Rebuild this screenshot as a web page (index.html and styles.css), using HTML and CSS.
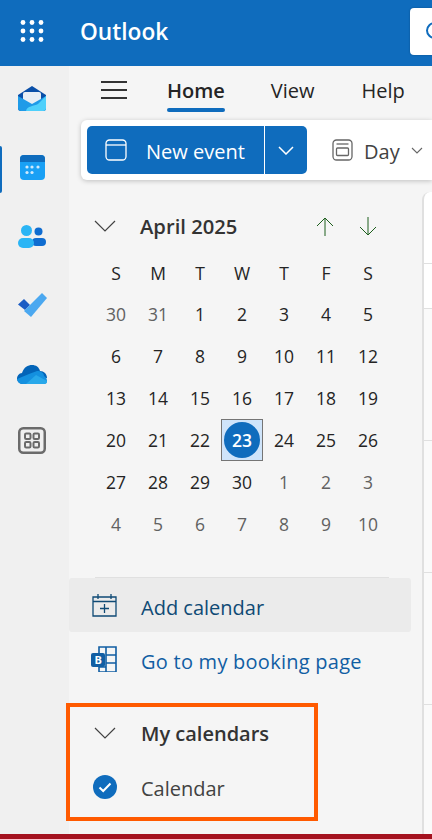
FILE: index.html
```html
<!DOCTYPE html>
<html lang="en">
<head>
    <meta charset="UTF-8">
    <meta name="viewport" content="width=device-width, initial-scale=1.0">
    <title>Outlook Calendar</title>
    <link rel="stylesheet" href="styles.css">
</head>
<body>
    <!-- top bar -->
    <header class="topbar">
        <div class="waffle">
            <svg width="24" height="22" viewBox="0 0 24 22" fill="#fff">
                <circle cx="3" cy="2.500" r="2.400"/><circle cx="12" cy="2.500" r="2.400"/><circle cx="21" cy="2.500" r="2.400"/>
                <circle cx="3" cy="11" r="2.400"/><circle cx="12" cy="11" r="2.400"/><circle cx="21" cy="11" r="2.400"/>
                <circle cx="3" cy="19.500" r="2.400"/><circle cx="12" cy="19.500" r="2.400"/><circle cx="21" cy="19.500" r="2.400"/>
            </svg>
        </div>
        <div class="brand">Outlook</div>
        <div class="search"><span class="search-ring"></span></div>
    </header>

    <div class="app">
        <!-- app rail -->
        <nav class="rail">
            <div class="rail-item">
                <svg width="28" height="25" viewBox="0 0 28 25">
                    <path d="M0 9 14 0l14 9v13a3 3 0 0 1-3 3H3a3 3 0 0 1-3-3z" fill="#0a4fa8"/>
                    <rect x="5" y="6" width="18" height="12" rx="2" fill="#e8eef5"/>
                    <path d="M0 10l14 8 14-8v12a3 3 0 0 1-3 3H3a3 3 0 0 1-3-3z" fill="#1f9be8"/>
                    <path d="M8 25c1-5 8-5 12-7l8-8v12a3 3 0 0 1-3 3z" fill="#4fd0fb"/>
                </svg>
            </div>
            <div class="rail-item rail-active">
                <svg width="25" height="25" viewBox="0 0 25 25">
                    <rect width="25" height="25" rx="4" fill="#19a0f5"/>
                    <path d="M0 7V4a4 4 0 0 1 4-4h17a4 4 0 0 1 4 4v3z" fill="#0f6cbd"/>
                    <g fill="#cfe9fc">
                        <circle cx="7" cy="12" r="1.600"/><circle cx="12" cy="12" r="1.600"/><circle cx="18" cy="12" r="1.600"/>
                        <circle cx="7" cy="17.500" r="1.600"/><circle cx="12" cy="17.500" r="1.600"/>
                    </g>
                </svg>
            </div>
            <div class="rail-item">
                <svg width="28" height="23" viewBox="0 0 28 23">
                    <circle cx="20.500" cy="6.500" r="4" fill="#0f6cd0"/>
                    <rect x="14" y="13" width="14" height="8" rx="4" fill="#0f6cd0"/>
                    <circle cx="8.500" cy="5.500" r="5.500" fill="#2bb5f5"/>
                    <rect x="0" y="13" width="16" height="10" rx="5" fill="#2bb5f5"/>
                </svg>
            </div>
            <div class="rail-item">
                <svg width="29" height="24" viewBox="0 0 29 24">
                    <path d="M6 6 12 12 7 17 0 11.500z" fill="#1c5cc4"/>
                    <path d="M24 0l5 5-16 19-7-6z" fill="#4ba8f0"/>
                </svg>
            </div>
            <div class="rail-item">
                <svg width="30" height="19" viewBox="0 0 30 19">
                    <path d="M8 19H6a5.500 5.500 0 0 1-1-11C7 2 11 0 15 0c4 0 7 2 8 6 4 0 7 3 7 7z" fill="#0364b8"/>
                    <path d="M12 9l8-3c4 0 7 2 7 5 2 1 3 3 3 5a3 3 0 0 1-3 3H6a6 6 0 0 1-6-5z" fill="#1490df"/>
                    <path d="M30 16a3 3 0 0 1-3 3H9l10-9z" fill="#28a8ea"/>
                </svg>
            </div>
            <div class="rail-item rail-apps">
                <svg width="28" height="27" viewBox="0 0 28 27" fill="none" stroke="#6b6b6b">
                    <rect x="1.250" y="1.250" width="25.500" height="24.500" rx="4" stroke-width="2.500"/>
                    <rect x="7" y="6.500" width="5.500" height="5.500" rx="1.200" stroke-width="2"/>
                    <rect x="15.500" y="6.500" width="5.500" height="5.500" rx="1.200" stroke-width="2"/>
                    <rect x="7" y="15" width="5.500" height="5.500" rx="1.200" stroke-width="2"/>
                    <rect x="15.500" y="15" width="5.500" height="5.500" rx="1.200" stroke-width="2"/>
                </svg>
            </div>
        </nav>

        <div class="main">
            <!-- tabs -->
            <div class="tabs">
                <div class="hamburger"><span></span><span></span><span></span></div>
                <div class="tab tab-active">Home</div>
                <div class="tab">View</div>
                <div class="tab">Help</div>
            </div>

            <!-- ribbon -->
            <div class="ribbon">
                <div class="new-event">
                    <div class="new-event-main">
                        <svg width="22" height="22" viewBox="0 0 22 22" fill="none" stroke="#fff" stroke-width="1.300">
                            <rect x="1" y="1" width="20" height="20" rx="3.500"/>
                            <path d="M1 6h20"/>
                        </svg>
                        <span>New event</span>
                    </div>
                    <div class="new-event-drop">
                        <svg width="16" height="9" viewBox="0 0 16 9" fill="none" stroke="#fff" stroke-width="1.500"><path d="M1 1l7 7 7-7"/></svg>
                    </div>
                </div>
                <div class="day-picker">
                    <svg width="21" height="22" viewBox="0 0 21 22" fill="none" stroke="#666" stroke-width="1.300">
                        <rect x="1" y="1" width="19" height="20" rx="3.500"/>
                        <path d="M4.500 5h12"/>
                        <rect x="4.500" y="9" width="12" height="7.500" rx="1"/>
                    </svg>
                    <span>Day</span>
                    <svg width="12" height="7" viewBox="0 0 12 7" fill="none" stroke="#666" stroke-width="1.100"><path d="M1 1l5 5 5-5"/></svg>
                </div>
            </div>

            <div class="content">
                <aside class="panel">
                    <!-- month header -->
                    <div class="month-head">
                        <svg class="chev" width="22" height="12" viewBox="0 0 22 12" fill="none" stroke="#424242" stroke-width="1.200"><path d="M1 1l10 10L21 1"/></svg>
                        <div class="month-title">April 2025</div>
                        <div class="month-arrows">
                            <svg width="18" height="19" viewBox="0 0 18 19" fill="none" stroke="#1c5e1c" stroke-width="1"><path d="M9 19V1M1 9l8-8 8 8"/></svg>
                            <svg width="18" height="19" viewBox="0 0 18 19" fill="none" stroke="#1c5e1c" stroke-width="1"><path d="M9 0v18M1 10l8 8 8-8"/></svg>
                        </div>
                    </div>

                    <!-- mini calendar -->
                    <div class="cal-grid">
                        <div class="dow">S</div><div class="dow">M</div><div class="dow">T</div><div class="dow">W</div><div class="dow">T</div><div class="dow">F</div><div class="dow">S</div>
                        <div class="day off">30</div><div class="day off">31</div><div class="day">1</div><div class="day">2</div><div class="day">3</div><div class="day">4</div><div class="day">5</div>
                        <div class="day">6</div><div class="day">7</div><div class="day">8</div><div class="day">9</div><div class="day">10</div><div class="day">11</div><div class="day">12</div>
                        <div class="day">13</div><div class="day">14</div><div class="day">15</div><div class="day">16</div><div class="day">17</div><div class="day">18</div><div class="day">19</div>
                        <div class="day">20</div><div class="day">21</div><div class="day">22</div><div class="day today"><span>23</span></div><div class="day">24</div><div class="day">25</div><div class="day">26</div>
                        <div class="day">27</div><div class="day">28</div><div class="day">29</div><div class="day">30</div><div class="day off">1</div><div class="day off">2</div><div class="day off">3</div>
                        <div class="day off">4</div><div class="day off">5</div><div class="day off">6</div><div class="day off">7</div><div class="day off">8</div><div class="day off">9</div><div class="day off">10</div>
                    </div>

                    <div class="panel-rule"></div>

                    <div class="link-row link-hover">
                        <svg width="25" height="24" viewBox="0 0 25 24" fill="none" stroke="#0f4a75" stroke-width="1.300">
                            <path d="M1 4h23v19H1zM1 8.500h23M6 1v5M19 1v5M12.500 11v9M8 15.500h9"/>
                        </svg>
                        <span>Add calendar</span>
                    </div>
                    <div class="link-row link-booking">
                        <svg width="26" height="26" viewBox="0 0 26 26">
                            <path d="M8 1h17v25H8z" fill="none" stroke="#115ea3" stroke-width="1.600"/>
                            <path d="M15 1v25M25 9h-10M25 17h-10M8 21h7" fill="none" stroke="#115ea3" stroke-width="1.600"/>
                            <rect x="0" y="7" width="14" height="14" rx="2" fill="#115ea3"/>
                            <text x="3.500" y="18" class="bookings-b">B</text>
                        </svg>
                        <span>Go to my booking page</span>
                    </div>

                    <!-- highlighted section -->
                    <div class="my-cals">
                        <div class="my-cals-head">
                            <svg width="22" height="12" viewBox="0 0 22 12" fill="none" stroke="#424242" stroke-width="1.200"><path d="M1 1l10 10L21 1"/></svg>
                            <span>My calendars</span>
                        </div>
                        <div class="my-cals-item">
                            <svg width="24" height="24" viewBox="0 0 24 24">
                                <circle cx="12" cy="12" r="12" fill="#0f6cbd"/>
                                <path d="M6.500 12.500l3.700 3.500 7.300-7.500" fill="none" stroke="#fff" stroke-width="2"/>
                            </svg>
                            <span>Calendar</span>
                        </div>
                    </div>
                </aside>

                <!-- day view, cut off by the window edge -->
                <section class="day-view">
                    <div class="slot slot-first"></div>
                    <div class="slot slot-second"></div>
                    <div class="slot slot-off"></div>
                    <div class="slot slot-off"></div>
                    <div class="slot slot-off"></div>
                    <div class="slot slot-off"></div>
                </section>
            </div>
        </div>
    </div>
    <div class="taskbar-edge"></div>
</body>
</html>
```

FILE: styles.css
```css
* {
    box-sizing: border-box;
}

html, body {
    height: 100%;
}

body {
    margin: 0;
    width: 432px;
    height: 839px;
    overflow: hidden;
    display: flex;
    flex-direction: column;
    font-family: "Open Sans", "Noto Sans", sans-serif;
    color: #242424;
    background: #f5f5f5;
}

svg {
    display: block;
    flex: none;
}

.topbar {
    height: 66px;
    flex: none;
    background: #0f6cbd;
    display: flex;
    align-items: center;
    padding: 0 0 4px 20px;
}

.waffle {
    width: 60px;
}

.brand {
    color: #fff;
    font-size: 22.700px;
    font-weight: 600;
}

.search {
    margin-left: auto;
    width: 22px;
    height: 47px;
    background: #fff;
    border-radius: 4px 0 0 4px;
    padding: 14px 0 0 16px;
    overflow: hidden;
    box-shadow: 0 0 2px rgba(0, 0, 0, 0.3);
}

.search-ring {
    display: block;
    width: 18px;
    height: 17px;
    border: 2px solid #0f6cbd;
    border-radius: 50%;
}

.app {
    flex: 1;
    display: flex;
    min-height: 0;
}

.rail {
    width: 69px;
    flex: none;
    background: #f0f0f0;
    display: flex;
    flex-direction: column;
}

.rail-item {
    height: 69px;
    display: flex;
    align-items: center;
    justify-content: center;
    padding: 0 5px 5px 0;
    position: relative;
}

.rail-apps {
    padding-bottom: 11px;
}

.rail-active::before {
    content: "";
    position: absolute;
    left: 0;
    top: 11px;
    width: 2px;
    height: 47px;
    background: #0f6cbd;
    border-radius: 0 2px 2px 0;
}

.main {
    flex: 1;
    min-width: 0;
    display: flex;
    flex-direction: column;
}

.tabs {
    height: 54px;
    flex: none;
    display: flex;
    align-items: center;
    padding: 0 0 4px 32px;
}

.hamburger {
    width: 26px;
    flex: none;
    margin: 0 40px 2px 0;
    display: flex;
    flex-direction: column;
    gap: 6px;
}

.hamburger span {
    display: block;
    height: 2px;
    background: #333;
}

.tab {
    flex: none;
    font-size: 20px;
    margin-right: 47px;
    position: relative;
    line-height: 32px;
}

.tab-active {
    font-weight: 600;
    margin-right: 46px;
}

.tab-active::after {
    content: "";
    position: absolute;
    left: 0;
    right: 0;
    bottom: -5px;
    height: 4px;
    border-radius: 2px;
    background: #0f6cbd;
}

.ribbon {
    height: 60px;
    flex: none;
    margin-left: 12px;
    background: #fff;
    border-radius: 6px 0 0 6px;
    box-shadow: 0 1px 5px rgba(0, 0, 0, 0.22);
    display: flex;
    align-items: center;
    padding-left: 6px;
    position: relative;
    z-index: 1;
}

.new-event {
    display: flex;
    height: 48px;
    width: 220px;
    flex: none;
    background: #0f6cbd;
    border-radius: 5px;
    color: #fff;
}

.new-event-main {
    width: 178px;
    display: flex;
    align-items: center;
    gap: 19px;
    padding-left: 18px;
    font-size: 20px;
    border-right: 1px solid #fff;
}

.new-event-main span,
.day-picker span {
    padding-top: 2px;
}

.new-event-drop {
    flex: 1;
    display: flex;
    align-items: center;
    justify-content: center;
}

.day-picker {
    display: flex;
    align-items: center;
    margin-left: 25px;
    gap: 11px;
    font-size: 20px;
    color: #424242;
    flex: none;
}

.content {
    flex: 1;
    min-height: 0;
    display: flex;
}

.panel {
    width: 353px;
    flex: none;
    padding-top: 26px;
}

.month-head {
    height: 40px;
    display: flex;
    align-items: center;
    padding-left: 25px;
}

.month-title {
    margin-left: 24px;
    font-size: 20.200px;
    font-weight: 600;
    color: #333;
}

.month-arrows {
    margin-left: auto;
    margin-right: 45px;
    display: flex;
    gap: 25px;
}

.cal-grid {
    display: grid;
    grid-template-columns: repeat(7, 42px);
    grid-template-rows: 41px;
    grid-auto-rows: 42px;
    margin-left: 26px;
    margin-top: 6px;
    font-size: 17.500px;
}

.dow,
.day {
    display: flex;
    align-items: center;
    justify-content: center;
}

.off {
    color: #616161;
}

.today {
    background: #cfe4fa;
    border: 1px solid #757575;
}

.today span {
    width: 36px;
    height: 36px;
    border-radius: 50%;
    background: #0f6cbd;
    color: #fff;
    font-weight: 600;
    display: flex;
    align-items: center;
    justify-content: center;
}

.panel-rule {
    height: 1px;
    margin: 32px 33px 0 26px;
    background: #e0e0e0;
}

.link-row {
    height: 54px;
    display: flex;
    align-items: center;
    gap: 24px;
    padding-left: 23px;
    font-size: 20px;
    color: #115ea3;
}

.link-row span {
    padding-top: 4px;
}

.link-hover {
    background: #ebebeb;
    border-radius: 3px;
    color: #0f4a75;
    margin-right: 11px;
}

.link-booking {
    padding-left: 22px;
    gap: 24px;
    letter-spacing: 0.250px;
}

.bookings-b {
    font-family: "Open Sans", sans-serif;
    font-size: 11px;
    font-weight: 700;
    fill: #fff;
}

.my-cals {
    width: 252px;
    height: 118px;
    margin-top: 17px;
    margin-left: -3px;
    border: 4px solid #ff5a00;
}

.my-cals-head,
.my-cals-item {
    display: flex;
    align-items: center;
    font-size: 20px;
}

.my-cals-head {
    height: 52px;
    padding-left: 24px;
    gap: 25px;
    font-weight: 600;
    color: #333;
}

.my-cals-item {
    height: 56px;
    padding-left: 23px;
    gap: 24px;
    color: #424242;
}

.my-cals-item span {
    padding-top: 3px;
}

.day-view {
    flex: 1;
    margin-top: 12px;
    background: #fff;
    border-top-left-radius: 8px;
    border-left: 2px solid #e0e0e0;
}

.slot {
    border-bottom: 1px solid #e0e0e0;
}

.slot-first {
    height: 72px;
}

.slot-second {
    height: 44px;
    border-bottom: 0;
}

.slot-off {
    height: 132px;
    background: #fafafa;
    border-top: 1px solid #e0e0e0;
    border-bottom: 0;
}

.taskbar-edge {
    height: 5px;
    flex: none;
    background: #a4121f;
}
```
